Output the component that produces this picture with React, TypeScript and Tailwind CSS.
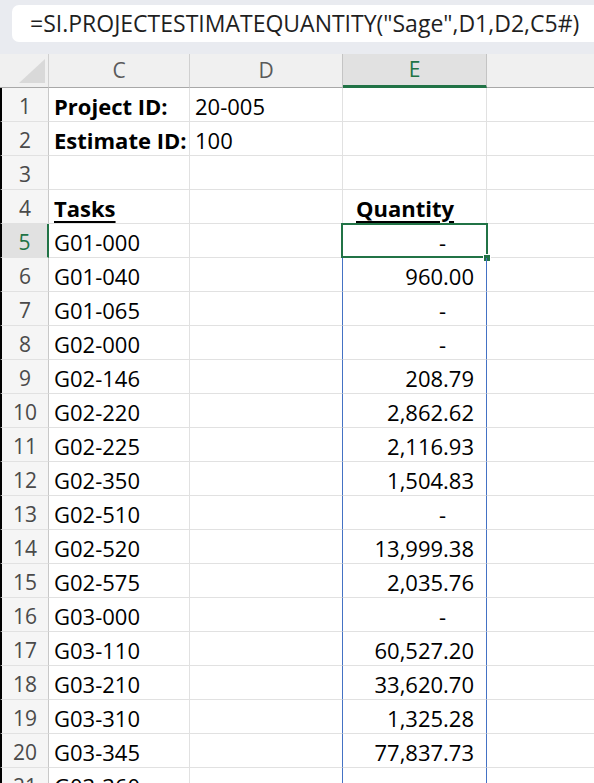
import React from "react";

const rows: [string, string, string, string][] = [
  ["1", "Project ID:", "20-005", ""],
  ["2", "Estimate ID:", "100", ""],
  ["3", "", "", ""],
  ["4", "Tasks", "", "Quantity"],
  ["5", "G01-000", "", "-"],
  ["6", "G01-040", "", "960.00"],
  ["7", "G01-065", "", "-"],
  ["8", "G02-000", "", "-"],
  ["9", "G02-146", "", "208.79"],
  ["10", "G02-220", "", "2,862.62"],
  ["11", "G02-225", "", "2,116.93"],
  ["12", "G02-350", "", "1,504.83"],
  ["13", "G02-510", "", "-"],
  ["14", "G02-520", "", "13,999.38"],
  ["15", "G02-575", "", "2,035.76"],
  ["16", "G03-000", "", "-"],
  ["17", "G03-110", "", "60,527.20"],
  ["18", "G03-210", "", "33,620.70"],
  ["19", "G03-310", "", "1,325.28"],
  ["20", "G03-345", "", "77,837.73"],
  ["21", "G03-360", "", ""],
];

const font = { fontFamily: '"Open Sans", "Noto Sans", sans-serif' };

export default function App() {
  return (
    <div className="w-[594px] h-[783px] overflow-hidden bg-white" style={font}>
      {/* formula bar */}
      <div className="h-[54px] bg-[#e9ebf0] pt-[5px] pl-[12px]">
        <div className="h-[37px] bg-white rounded-l-[7px] flex items-center pl-[18px] text-[23px] text-[#1f1f1f] whitespace-nowrap overflow-hidden">
          =SI.PROJECTESTIMATEQUANTITY("Sage",D1,D2,C5#)
        </div>
      </div>

      {/* grid */}
      <div className="grid grid-cols-[49px_141px_153px_144px_1fr] text-[22px] text-black">
        {/* header row */}
        <div className="h-[34px] bg-[#f0f0f0] border-r border-[#d0d0d0] border-b border-b-[#a8a8a8] relative">
          <div className="absolute right-[3px] bottom-[4px] w-0 h-0 border-l-[26px] border-l-transparent border-b-[24px] border-b-[#d9d9d9]" />
        </div>
        <div className="h-[34px] bg-[#f0f0f0] border-r border-[#d0d0d0] border-b border-b-[#a8a8a8] flex items-center justify-center text-[21px] text-[#5a5a5a]">C</div>
        <div className="h-[34px] bg-[#f0f0f0] border-r border-[#c4c4c4] border-b border-b-[#a8a8a8] flex items-center justify-center text-[21px] text-[#5a5a5a]">D</div>
        <div className="h-[34px] bg-[#e1e1e1] border-r border-[#c4c4c4] border-b-[3px] border-b-[#217346] flex items-center justify-center text-[21px] text-[#217346]">E</div>
        <div className="h-[34px] bg-[#f0f0f0] border-b border-b-[#a8a8a8]" />

        {rows.map(([n, c, d, e]) => {
          const num = parseInt(n, 10);
          const sel = num === 5;
          const spill = num >= 5;
          const header = c === "Tasks";
          const bold = num <= 2 || header;
          const isNum = num >= 5;
          return (
            <React.Fragment key={n}>
              <div
                className={
                  "h-[34px] border-l-2 border-l-black border-b border-b-[#e1e1e1] flex items-end justify-center text-[21px] leading-[30px] " +
                  (sel
                    ? "bg-[#e1e1e1] text-[#217346] border-r-2 border-r-[#217346]"
                    : "bg-[#f5f5f5] text-[#4a4a4a] border-r border-r-[#c8c8c8]")
                }
              >
                {n}
              </div>
              <div className="h-[34px] border-r border-b border-[#e1e1e1] flex items-end pl-[5px] leading-[29px] whitespace-nowrap">
                <span className={(bold ? "font-bold " : "") + (header ? "underline decoration-[2px] underline-offset-[4px]" : "")}>{c}</span>
              </div>
              <div
                className={
                  "h-[34px] border-b border-b-[#e1e1e1] flex items-end pl-[5px] leading-[29px] border-r " +
                  (spill ? "border-r-[#4472c4]" : "border-r-[#e1e1e1]")
                }
              >
                {d}
              </div>
              <div
                className={
                  "h-[34px] border-b border-b-[#e1e1e1] flex items-end leading-[29px] border-r relative " +
                  (spill ? "border-r-[#4472c4] " : "border-r-[#e1e1e1] ") +
                  (isNum ? "justify-end " + (e === "-" ? "pr-[40px]" : "pr-[12px]") : "pl-[13px]")
                }
              >
                {e === "Quantity" ? (
                  <span className="font-bold underline decoration-[2px] underline-offset-[4px]">{e}</span>
                ) : (
                  e
                )}
                {sel && (
                  <>
                    <div className="absolute left-[-2px] top-[-1px] right-[-2px] bottom-[-1px] border-2 border-[#217346]" />
                    <div className="absolute right-[-5px] bottom-[-5px] w-[8px] h-[8px] bg-[#217346] border border-white" />
                  </>
                )}
              </div>
              <div className="h-[34px] border-b border-b-[#e1e1e1]" />
            </React.Fragment>
          );
        })}
      </div>
    </div>
  );
}
